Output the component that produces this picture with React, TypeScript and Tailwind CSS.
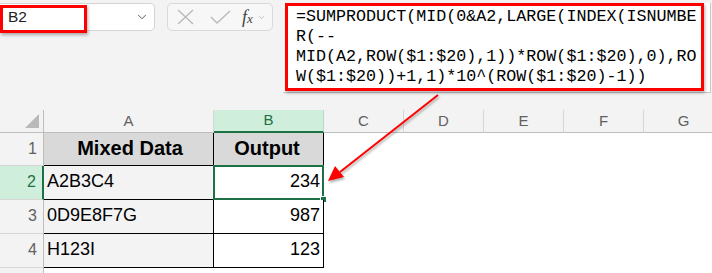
import { ChevronDown } from "lucide-react";

const COLS = ["C", "D", "E", "F", "G"];

const FORMULA = [
  "=SUMPRODUCT(MID(0&A2,LARGE(INDEX(ISNUMBE",
  "R(--",
  "MID(A2,ROW($1:$20),1))*ROW($1:$20),0),RO",
  "W($1:$20))+1,1)*10^(ROW($1:$20)-1))",
];

const ROWS = [
  { n: 1, a: "Mixed Data", b: "Output", head: true, h: "h-[33px]" },
  { n: 2, a: "A2B3C4", b: "234", head: false, h: "h-[34px]" },
  { n: 3, a: "0D9E8F7G", b: "987", head: false, h: "h-[34px]" },
  { n: 4, a: "H123I", b: "123", head: false, h: "h-[34px]" },
];

function TopBar() {
  return (
    <div className="flex h-[92px] items-start pt-[3px]">
      <div className="relative flex h-[28px] w-[155px] items-center justify-between rounded-r-[5px] border border-l-0 border-[#d4d4d4] bg-white pl-[8px] pr-[5px]">
        <span className="text-[15.5px] text-[#222]">B2</span>
        <ChevronDown size={14} strokeWidth={1.5} className="text-[#444]" />
        <div className="absolute left-0 top-[1px] h-[28px] w-[87px] border-[3px] border-[#f00] shadow-[1px_2px_3px_rgba(0,0,0,0.3)]" />
      </div>
      <div className="ml-[12px] flex h-[28px] w-[106px] items-center rounded-[5px] border border-[#d9d9d9] bg-[#f7f7f7] pl-[9px]">
        <svg width="17" height="16" viewBox="0 0 17 16" fill="none" stroke="#b8b8b8" strokeWidth="1.3">
          <path d="M1 1 L16 15 M16 1 L1 15" />
        </svg>
        <svg width="21" height="14" viewBox="0 0 21 14" fill="none" stroke="#b8b8b8" strokeWidth="1.3" className="ml-[16px]">
          <path d="M1 7 L7 13 L20 1" />
        </svg>
        <span className="ml-[11px] font-['Liberation_Serif'] text-[18px] italic text-[#444]">
          f<span className="text-[13px]">x</span>
        </span>
        <ChevronDown size={9} strokeWidth={1.5} className="ml-[4px] text-[#999]" />
      </div>
      <div className="ml-[10px] h-[90px] w-[428px] border-b border-r border-[#c8c8c8] bg-white">
        <div className="ml-[2px] h-[88px] w-[419px] border-[3px] border-[#f00] pl-[8px] pt-[1px] font-['Liberation_Mono'] text-[16.7px] leading-[20px] text-black shadow-[1px_2px_3px_rgba(0,0,0,0.3)]">
          {FORMULA.map((l, i) => (
            <div key={i} className="whitespace-pre">{l}</div>
          ))}
        </div>
      </div>
    </div>
  );
}

function Sheet() {
  return (
    <div className="mt-[18px] grid grid-cols-[44px_170px_110px_80px_80px_80px_80px_80px] text-[#616161]">
      {/* header row */}
      <div className="relative h-[23px] border-b border-r border-[#bdbdbd]">
        <div className="absolute bottom-[4px] right-[4px] h-0 w-0 border-b-[14px] border-l-[14px] border-b-[#b9b9b9] border-l-transparent" />
      </div>
      <div className="flex h-[23px] items-center justify-center border-b border-r border-[#bdbdbd] border-r-[#d6d6d6] text-[15px]">A</div>
      <div className="flex h-[23px] items-center justify-center border-b-2 border-r border-b-[#1e7145] border-r-[#b5dcc3] bg-[#cfeedb] text-[15px] text-[#1e7145]">B</div>
      {COLS.map((c) => (
        <div key={c} className="flex h-[23px] items-center justify-center border-b border-r border-[#bdbdbd] border-r-[#d6d6d6] text-[15px]">
          {c}
        </div>
      ))}

      {ROWS.map((r) => (
        <Row key={r.n} r={r} />
      ))}

      <div className="h-[10px] border-r border-[#bdbdbd]" />
      <div className="col-span-7 h-[10px] bg-white" />
    </div>
  );
}

function Row({ r }: { r: (typeof ROWS)[number] }) {
  const sel = r.n === 2;
  return (
    <>
      <div
        className={`flex ${r.h} items-center justify-end border-b pr-[6px] pb-[1px] text-[16px] ${
          sel
            ? "border-r-2 border-b-[#d6d6d6] border-r-[#1e7145] bg-[#cfeedb] text-[#1e7145]"
            : "border-r border-b-[#d6d6d6] border-r-[#bdbdbd]"
        }`}
      >
        {r.n}
      </div>
      <div
        className={`flex ${r.h} items-center border-b border-r border-black pl-[3px] pb-[3px] text-black ${
          r.head ? "justify-center bg-[#d9d9d9] text-[20px] font-bold" : "text-[18px]"
        }`}
      >
        {r.a}
      </div>
      <div
        className={`relative flex ${r.h} items-center border-b border-r border-black pr-[3px] pb-[3px] text-black ${
          r.head ? "justify-center bg-[#d9d9d9] text-[20px] font-bold" : "justify-end bg-white text-[18px]"
        }`}
      >
        {r.b}
        {sel && (
          <>
            <div className="absolute -left-[1px] -top-[1px] h-[35px] w-[111px] border-2 border-[#1e7145]" />
            <div className="absolute -bottom-[4px] -right-[4px] h-[7px] w-[7px] border border-white bg-[#1e7145]" />
          </>
        )}
      </div>
      <div className={`col-span-5 ${r.h} bg-white`} />
    </>
  );
}

export default function App() {
  return (
    <div className="relative h-[273px] w-[712px] overflow-hidden bg-[#f3f3f3] font-['Liberation_Sans',Arial,sans-serif]">
      <TopBar />
      <Sheet />
      <svg
        className="pointer-events-none absolute left-0 top-0 drop-shadow-[1px_2px_1px_rgba(0,0,0,0.3)]"
        width="712"
        height="273"
      >
        <line x1="438" y1="95" x2="340" y2="172" stroke="#f00" strokeWidth="2" />
        <polygon points="328,181 335,166 344,177" fill="#f00" />
      </svg>
    </div>
  );
}
